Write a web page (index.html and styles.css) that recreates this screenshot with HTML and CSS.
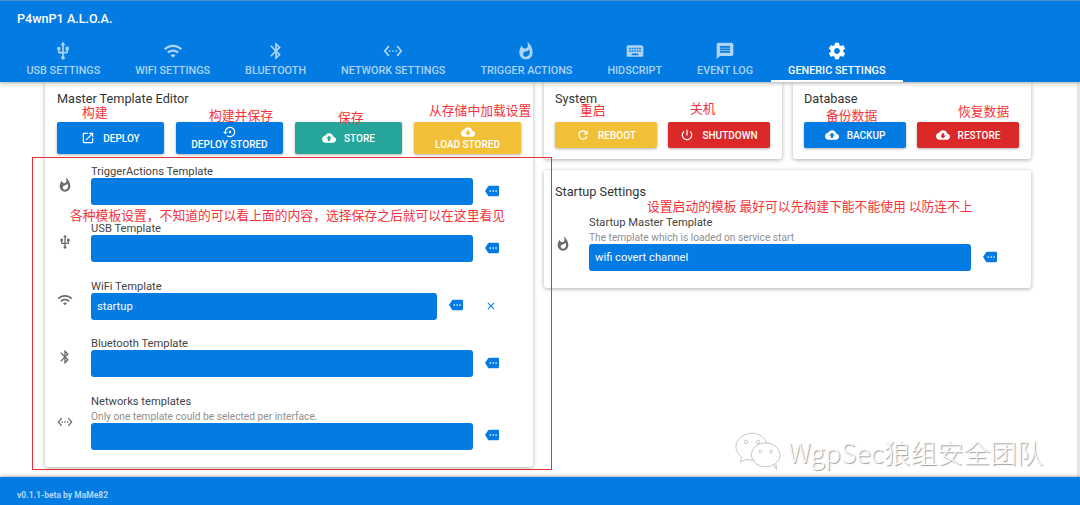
FILE: index.html
```html
<!DOCTYPE html>
<html lang="en">
<head>
<meta charset="utf-8">
<title>P4wnP1 A.L.O.A.</title>
<link rel="stylesheet" href="styles.css">
</head>
<body>
<svg class="defs" width="0" height="0" aria-hidden="true">
  <symbol id="i-usb" viewBox="0 0 24 24"><path d="M15 7v4h1v2h-3V5h2l-3-4-3 4h2v8H8v-2.07c.7-.37 1.2-1.08 1.2-1.93 0-1.21-.99-2.2-2.2-2.2-1.21 0-2.2.99-2.2 2.2 0 .85.5 1.56 1.2 1.93V13c0 1.11.89 2 2 2h3v3.05c-.71.37-1.2 1.1-1.2 1.95 0 1.22.99 2.2 2.2 2.2 1.21 0 2.2-.98 2.2-2.2 0-.85-.49-1.58-1.2-1.95V15h3c1.11 0 2-.89 2-2v-2h1V7h-4z"/></symbol>
  <symbol id="i-wifi" viewBox="0 0 24 24"><path d="M1 9l2 2c4.97-4.97 13.03-4.97 18 0l2-2C16.93 2.93 7.08 2.93 1 9zm8 8l3 3 3-3c-1.65-1.66-4.34-1.66-6 0zm-4-4l2 2c2.76-2.76 7.24-2.76 10 0l2-2C15.14 9.14 8.87 9.14 5 13z"/></symbol>
  <symbol id="i-bt" viewBox="0 0 24 24"><path d="M17.71 7.71L12 2h-1v7.59L6.41 5 5 6.41 10.59 12 5 17.59 6.41 19 11 14.41V22h1l5.71-5.71-4.3-4.29 4.3-4.29zM13 5.83l1.88 1.88L13 9.59V5.83zm1.88 10.46L13 18.17v-3.76l1.88 1.88z"/></symbol>
  <symbol id="i-net" viewBox="0 0 24 24"><path d="M7.77 6.76L6.23 5.48.82 12l5.41 6.52 1.54-1.28L3.42 12l4.35-5.24zM7 13h2v-2H7v2zm10-2h-2v2h2v-2zm-6 2h2v-2h-2v2zm6.77-7.52l-1.54 1.28L20.58 12l-4.35 5.24 1.54 1.28L23.18 12l-5.41-6.52z"/></symbol>
  <symbol id="i-fire" viewBox="0 0 24 24"><path d="M13.5.67s.74 2.65.74 4.8c0 2.06-1.35 3.73-3.41 3.73-2.07 0-3.63-1.67-3.63-3.73l.03-.36C5.21 7.51 4 10.62 4 14c0 4.42 3.58 8 8 8s8-3.58 8-8C20 8.61 17.41 3.8 13.5.67zM11.71 19c-1.78 0-3.22-1.4-3.22-3.14 0-1.62 1.05-2.76 2.81-3.12 1.77-.36 3.6-1.21 4.62-2.58.39 1.29.59 2.65.59 4.04 0 2.65-2.15 4.8-4.8 4.8z"/></symbol>
  <symbol id="i-kbd" viewBox="0 0 24 24"><path d="M20 5H4c-1.1 0-1.99.9-1.99 2L2 17c0 1.1.9 2 2 2h16c1.1 0 2-.9 2-2V7c0-1.1-.9-2-2-2zm-9 3h2v2h-2V8zm0 3h2v2h-2v-2zM8 8h2v2H8V8zm0 3h2v2H8v-2zm-1 2H5v-2h2v2zm0-3H5V8h2v2zm9 7H8v-2h8v2zm0-4h-2v-2h2v2zm0-3h-2V8h2v2zm3 3h-2v-2h2v2zm0-3h-2V8h2v2z"/></symbol>
  <symbol id="i-msg" viewBox="0 0 24 24"><path d="M20 2H4c-1.1 0-1.99.9-1.99 2L2 22l4-4h14c1.1 0 2-.9 2-2V4c0-1.1-.9-2-2-2zm-2 12H6v-2h12v2zm0-3H6V9h12v2zm0-3H6V6h12v2z"/></symbol>
  <symbol id="i-gear" viewBox="0 0 24 24"><path d="M19.43 12.98c.04-.32.07-.64.07-.98s-.03-.66-.07-.98l2.11-1.65c.19-.15.24-.42.12-.64l-2-3.46c-.12-.22-.39-.3-.61-.22l-2.49 1c-.52-.4-1.08-.73-1.69-.98l-.38-2.65C14.46 2.18 14.25 2 14 2h-4c-.25 0-.46.18-.49.42l-.38 2.65c-.61.25-1.17.59-1.69.98l-2.49-1c-.23-.09-.49 0-.61.22l-2 3.46c-.13.22-.07.49.12.64l2.11 1.65c-.04.32-.07.65-.07.98s.03.66.07.98l-2.11 1.65c-.19.15-.24.42-.12.64l2 3.46c.12.22.39.3.61.22l2.49-1c.52.4 1.08.73 1.69.98l.38 2.65c.03.24.24.42.49.42h4c.25 0 .46-.18.49-.42l.38-2.65c.61-.25 1.17-.59 1.69-.98l2.49 1c.23.09.49 0 .61-.22l2-3.46c.12-.22.07-.49-.12-.64l-2.11-1.65zM12 15.5c-1.93 0-3.5-1.57-3.5-3.5s1.57-3.5 3.5-3.5 3.5 1.57 3.5 3.5-1.57 3.5-3.5 3.5z"/></symbol>
  <symbol id="i-launch" viewBox="0 0 24 24"><path d="M19 19H5V5h7V3H5c-1.11 0-2 .9-2 2v14c0 1.1.89 2 2 2h14c1.1 0 2-.9 2-2v-7h-2v7zM14 3v2h3.59l-9.83 9.83 1.41 1.41L19 6.41V10h2V3h-7z"/></symbol>
  <symbol id="i-restore" viewBox="0 0 24 24"><path d="M14 12c0-1.1-.9-2-2-2s-2 .9-2 2 .9 2 2 2 2-.9 2-2zm-2-9c-4.97 0-9 4.03-9 9H0l4 4 4-4H5c0-3.87 3.13-7 7-7s7 3.13 7 7-3.13 7-7 7c-1.51 0-2.91-.49-4.06-1.3l-1.42 1.44C8.04 20.3 9.94 21 12 21c4.97 0 9-4.03 9-9s-4.03-9-9-9z"/></symbol>
  <symbol id="i-up" viewBox="0 0 24 24"><path d="M19.35 10.04C18.67 6.59 15.64 4 12 4 9.11 4 6.6 5.64 5.35 8.04 2.34 8.36 0 10.91 0 14c0 3.31 2.69 6 6 6h13c2.76 0 5-2.24 5-5 0-2.64-2.05-4.78-4.65-4.96zM14 13v4h-4v-4H7l5-5 5 5h-3z"/></symbol>
  <symbol id="i-down" viewBox="0 0 24 24"><path d="M19.35 10.04C18.67 6.59 15.64 4 12 4 9.11 4 6.6 5.64 5.35 8.04 2.34 8.36 0 10.91 0 14c0 3.31 2.69 6 6 6h13c2.76 0 5-2.24 5-5 0-2.64-2.05-4.78-4.65-4.96zM17 13l-5 5-5-5h3V9h4v4h3z"/></symbol>
  <symbol id="i-refresh" viewBox="0 0 24 24"><path d="M17.65 6.35C16.2 4.9 14.21 4 12 4c-4.42 0-7.99 3.58-7.99 8s3.57 8 7.99 8c3.73 0 6.84-2.55 7.73-6h-2.08c-.82 2.33-3.04 4-5.65 4-3.31 0-6-2.69-6-6s2.69-6 6-6c1.66 0 3.14.69 4.22 1.78L13 11h7V4l-2.35 2.35z"/></symbol>
  <symbol id="i-power" viewBox="0 0 24 24"><path d="M13 3h-2v10h2V3zm4.83 2.17l-1.42 1.42C17.99 7.86 19 9.81 19 12c0 3.87-3.13 7-7 7s-7-3.13-7-7c0-2.19 1.01-4.14 2.58-5.42L6.17 5.17C4.23 6.82 3 9.26 3 12c0 4.97 4.03 9 9 9s9-4.03 9-9c0-2.74-1.23-5.18-3.17-6.83z"/></symbol>
  <symbol id="i-more" viewBox="0 0 24 24"><path d="M22 3H7c-.69 0-1.23.35-1.59.88L0 12l5.41 8.11c.36.53.9.89 1.59.89h15c1.1 0 2-.9 2-2V5c0-1.1-.9-2-2-2zM9 13.5c-.83 0-1.5-.67-1.5-1.5s.67-1.5 1.5-1.5 1.5.67 1.5 1.5-.67 1.5-1.5 1.5zm5 0c-.83 0-1.5-.67-1.5-1.5s.67-1.5 1.5-1.5 1.5.67 1.5 1.5-.67 1.5-1.5 1.5zm5 0c-.83 0-1.5-.67-1.5-1.5s.67-1.5 1.5-1.5 1.5.67 1.5 1.5-.67 1.5-1.5 1.5z"/></symbol>
  <symbol id="i-close" viewBox="0 0 24 24"><path d="M19 6.41L17.59 5 12 10.59 6.41 5 5 6.41 10.59 12 5 17.59 6.41 19 12 13.41 17.59 19 19 17.59 13.41 12z"/></symbol>
</svg>

<div class="page">
  <header class="header">
    <div class="brand">P4wnP1 A.L.O.A.</div>
    <nav class="tabs">
      <a class="tab"><svg class="tab-icon"><use href="#i-usb"/></svg><span>USB Settings</span></a>
      <a class="tab"><svg class="tab-icon"><use href="#i-wifi"/></svg><span>WiFi Settings</span></a>
      <a class="tab"><svg class="tab-icon"><use href="#i-bt"/></svg><span>Bluetooth</span></a>
      <a class="tab"><svg class="tab-icon"><use href="#i-net"/></svg><span>Network Settings</span></a>
      <a class="tab"><svg class="tab-icon"><use href="#i-fire"/></svg><span>Trigger Actions</span></a>
      <a class="tab"><svg class="tab-icon"><use href="#i-kbd"/></svg><span>HIDScript</span></a>
      <a class="tab"><svg class="tab-icon"><use href="#i-msg"/></svg><span>Event Log</span></a>
      <a class="tab tab-active"><svg class="tab-icon"><use href="#i-gear"/></svg><span>Generic Settings</span></a>
    </nav>
  </header>

  <main class="main">
    <section class="card card-master">
      <h2 class="card-title">Master Template Editor</h2>
      <div class="btn-row btn-row-master">
        <button class="btn btn-primary"><svg class="btn-icon"><use href="#i-launch"/></svg><span>Deploy</span></button>
        <button class="btn btn-primary btn-stack"><svg class="btn-icon"><use href="#i-restore"/></svg><span>Deploy Stored</span></button>
        <button class="btn btn-teal"><svg class="btn-icon"><use href="#i-up"/></svg><span>Store</span></button>
        <button class="btn btn-yellow btn-stack"><svg class="btn-icon"><use href="#i-down"/></svg><span>Load Stored</span></button>
      </div>
      <div class="rows">
        <div class="row">
          <svg class="row-icon"><use href="#i-fire"/></svg>
          <div class="field"><label class="field-label">TriggerActions Template</label><div class="select"></div></div>
          <svg class="tag"><use href="#i-more"/></svg>
        </div>
        <div class="row">
          <svg class="row-icon"><use href="#i-usb"/></svg>
          <div class="field"><label class="field-label">USB Template</label><div class="select"></div></div>
          <svg class="tag"><use href="#i-more"/></svg>
        </div>
        <div class="row">
          <svg class="row-icon"><use href="#i-wifi"/></svg>
          <div class="field"><label class="field-label">WiFi Template</label><div class="select">startup</div></div>
          <svg class="tag"><use href="#i-more"/></svg>
          <svg class="clear"><use href="#i-close"/></svg>
        </div>
        <div class="row">
          <svg class="row-icon"><use href="#i-bt"/></svg>
          <div class="field"><label class="field-label">Bluetooth Template</label><div class="select"></div></div>
          <svg class="tag"><use href="#i-more"/></svg>
        </div>
        <div class="row">
          <svg class="row-icon"><use href="#i-net"/></svg>
          <div class="field"><label class="field-label">Networks templates</label><div class="helper">Only one template could be selected per interface.</div><div class="select"></div></div>
          <svg class="tag"><use href="#i-more"/></svg>
        </div>
      </div>
    </section>

    <div class="side">
      <div class="side-top">
        <section class="card card-small">
          <h2 class="card-title">System</h2>
          <div class="btn-row">
            <button class="btn btn-yellow btn-short"><svg class="btn-icon"><use href="#i-refresh"/></svg><span>Reboot</span></button>
            <button class="btn btn-red btn-short"><svg class="btn-icon"><use href="#i-power"/></svg><span>Shutdown</span></button>
          </div>
        </section>
        <section class="card card-small">
          <h2 class="card-title">Database</h2>
          <div class="btn-row">
            <button class="btn btn-primary btn-short"><svg class="btn-icon"><use href="#i-up"/></svg><span>Backup</span></button>
            <button class="btn btn-red btn-short"><svg class="btn-icon"><use href="#i-down"/></svg><span>Restore</span></button>
          </div>
        </section>
      </div>
      <section class="card card-startup">
        <h2 class="card-title">Startup Settings</h2>
        <div class="row row-startup">
          <svg class="row-icon"><use href="#i-fire"/></svg>
          <div class="field"><label class="field-label">Startup Master Template</label><div class="helper">The template which is loaded on service start</div><div class="select">wifi covert channel</div></div>
          <svg class="tag"><use href="#i-more"/></svg>
        </div>
      </section>
    </div>
    <div class="scrollbar"></div>
  </main>

  <footer class="footer">v0.1.1-beta by MaMe82</footer>

  <div class="redbox"></div>
  <span class="note n1">构建</span>
  <span class="note n2">构建并保存</span>
  <span class="note n3">保存</span>
  <span class="note n4">从存储中加载设置</span>
  <span class="note n5">重启</span>
  <span class="note n6">关机</span>
  <span class="note n7">备份数据</span>
  <span class="note n8">恢复数据</span>
  <span class="note n9">各种模板设置，不知道的可以看上面的内容，选择保存之后就可以在这里看见</span>
  <span class="note n10">设置启动的模板 最好可以先构建下能不能使用 以防连不上</span>

  <div class="watermark">
    <svg class="wechat" viewBox="0 0 50 42">
      <path d="M19 2C9.6 2 2 8.3 2 16c0 4.3 2.4 8.1 6 10.6L6.500 32l6-3c2 .6 4.200 1 6.500 1 .9 0 1.700-.1 2.500-.2" />
      <path d="M34.500 12.500C32 6.400 26 2 19 2" />
      <ellipse cx="33" cy="24.500" rx="15" ry="12.500"/>
      <path d="M41 35l3.500 5-1-6.500" />
      <circle cx="12.500" cy="11" r="1.800"/><circle cx="25" cy="11" r="1.800"/>
      <circle cx="27.500" cy="21" r="1.500"/><circle cx="38.500" cy="21" r="1.500"/>
    </svg>
    <span class="wm-text">WgpSec狼组安全团队</span>
  </div>
</div>
</body>
</html>
```
FILE: styles.css
```css
* { box-sizing: border-box; }
html, body { margin: 0; padding: 0; height: 100%; overflow: hidden; }
body { font-family: Roboto, "Liberation Sans", sans-serif; background: #fff; color: #333; }
.defs { position: absolute; }

.page { position: relative; display: flex; flex-direction: column; height: 505px; width: 1080px; }

.header { position: relative; z-index: 2; height: 82px; flex: none; background: #027be3; border-top: 1px solid #4b90cf; box-shadow: 0 1px 4px rgba(0,0,0,.35); color: #fff; }
.brand { height: 34px; padding: 11px 0 0 17px; font-size: 12.6px; font-weight: 500; line-height: 14px; }
.tabs { display: flex; padding-left: 9px; height: 47px; }
.tab { display: flex; flex-direction: column; align-items: center; padding: 6px 17.5px 0; color: rgba(255,255,255,.68); }
.tab span { font-size: 10.8px; font-weight: 500; text-transform: uppercase; line-height: 13px; margin-top: 3px; white-space: nowrap; }
.tab-icon { width: 20px; height: 20px; fill: currentColor; }
.tab-active { color: #fff; border-bottom: 2px solid #fff; }

.main { flex: 1; display: flex; align-items: flex-start; padding-left: 45px; min-height: 0; }
.card { background: #fff; border-radius: 0 0 3px 3px; box-shadow: 0 1px 4px rgba(0,0,0,.32); }
.card-title { margin: 0; font-size: 12.7px; font-weight: 400; line-height: 16px; color: #333; }

.card-master { width: 488px; height: 385px; padding: 9px 12px 0; }
.btn-row { display: flex; gap: 11px; margin-top: 15px; }
.btn-row-master { gap: 12px; }
.btn { display: flex; align-items: center; justify-content: center; gap: 8px; width: 107px; height: 32px; padding: 0; border: 0; border-radius: 2px; font-family: inherit; font-size: 10px; font-weight: 500; text-transform: uppercase; color: #fff; box-shadow: 0 1px 3px rgba(0,0,0,.3); white-space: nowrap; }
.btn-icon { width: 14px; height: 14px; fill: currentColor; flex: none; }
.btn-stack { flex-direction: column; gap: 0; line-height: 12px; }
.btn-short { width: 102px; height: 26px; }
.btn-primary { background: #027be3; }
.btn-teal { background: #26a69a; }
.btn-yellow { background: #f2c037; }
.btn-red { background: #db2828; }

.rows { display: flex; flex-direction: column; gap: 17.4px; margin: 11px 22px 0 0; }
.row { display: flex; align-items: center; }
.row-icon { width: 16px; height: 16px; fill: #6b6b6b; flex: none; margin-right: 18px; }
.field { flex: 1; min-width: 0; }
.field-label { display: block; font-size: 11.2px; line-height: 13px; color: #444; }
.helper { font-size: 10.2px; line-height: 12px; margin-top: 3px; color: #8f8f8f; white-space: nowrap; }
.select { height: 27px; padding: 0 6px; border-radius: 3px; background: #027be3; color: #fff; font-size: 11.2px; line-height: 27px; }
.tag { width: 14px; height: 14px; fill: #027be3; flex: none; margin-left: 12px; align-self: flex-end; margin-bottom: 7.5px; }
.clear { width: 12px; height: 12px; fill: #027be3; flex: none; margin: 0 2px 8px 22px; align-self: flex-end; }

.side { width: 487px; margin-left: 11px; display: flex; flex-direction: column; gap: 11px; }
.side-top { display: flex; gap: 11px; }
.card-small { width: 238px; height: 77px; padding: 9px 11px 0; }
.card-startup { height: 118px; padding: 14px 34px 0 11px; border-radius: 3px; }
.row-startup { margin: 16px 0 0; }
.scrollbar { width: 3px; height: 100%; margin-left: auto; background: #e6e6e6; }

.footer { flex: none; height: 28px; padding: 13px 0 0 17px; background: #027be3; box-shadow: 0 -1px 3px rgba(0,0,0,.3); color: rgba(255,255,255,.7); font-size: 8.5px; font-weight: 700; line-height: 10px; position: relative; }

.redbox { position: absolute; left: 32px; top: 157px; width: 520px; height: 313px; border: 1px solid #e8303a; }
.note { position: absolute; font-family: "Noto Sans CJK SC", sans-serif; font-size: 12.8px; line-height: 16px; color: #f4333c; white-space: nowrap; }
.n1 { left: 82px; top: 104px; }
.n2 { left: 209px; top: 107px; }
.n3 { left: 338px; top: 109px; }
.n4 { left: 429px; top: 102px; }
.n5 { left: 580px; top: 102px; }
.n6 { left: 690px; top: 100px; }
.n7 { left: 826px; top: 107px; }
.n8 { left: 958px; top: 103px; }
.n9 { left: 70px; top: 207px; }
.n10 { left: 647px; top: 198px; }

.watermark { position: absolute; left: 734px; top: 431px; display: flex; align-items: center; gap: 6px; }
.wechat { width: 48px; height: 41px; fill: none; stroke: #c4c4c4; stroke-width: 1; }
.wm-text { font-family: "Noto Sans CJK SC", sans-serif; font-weight: 300; font-size: 26.6px; line-height: 30px; color: #fbfbfb; text-shadow: 1px 1px 1px #9c9c9c; white-space: nowrap; }
```
